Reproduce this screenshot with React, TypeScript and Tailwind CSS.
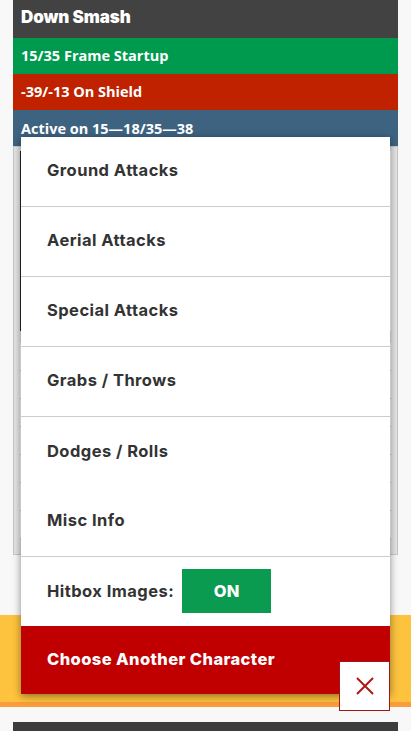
import React from "react";

const poppins = { fontFamily: "Inter, 'Noto Sans', sans-serif" };

export default function App() {
  const rows = Array.from({ length: 7 });
  const items = [
    { label: "Ground Attacks", divider: true },
    { label: "Aerial Attacks", divider: true },
    { label: "Special Attacks", divider: true },
    { label: "Grabs / Throws", divider: true },
    { label: "Dodges / Rolls", divider: false },
    { label: "Misc Info", divider: true },
  ];
  return (
    <div className="relative w-[411px] h-[731px] overflow-hidden bg-[#f8f8f8]">
      {/* card */}
      <div className="mx-[13px] flex flex-col">
        <div className="h-[38px] bg-[#424242] flex items-center pl-[8px] pb-[2px]">
          <span className="text-white text-[17px] font-black tracking-[-0.1px]" style={poppins}>
            Down Smash
          </span>
        </div>
        <div
          className="h-[36px] bg-[#009a4e] flex items-center pl-[8px] text-white text-[14.5px] font-bold"
          style={{ fontFamily: "'Open Sans', sans-serif" }}
        >
          15/35 Frame Startup
        </div>
        <div
          className="h-[36px] bg-[#c02200] flex items-center pl-[8px] text-white text-[14.5px] font-bold"
          style={{ fontFamily: "'Open Sans', sans-serif" }}
        >
          -39/-13 On Shield
        </div>
        <div
          className="h-[36px] bg-[#3e6381] flex items-start pt-[8px] pl-[8px] text-white text-[14.5px] font-bold"
          style={{ fontFamily: "'Open Sans', sans-serif" }}
        >
          Active on 15—18/35—38
        </div>
        <div className="h-[409px] border border-[#c8c8c8] bg-[#e4e4e4] px-[6px] pt-[4px] flex flex-col">
          <div className="h-[180px] bg-white border-l-2 border-[#222]" />
          <div className="h-[12px]" />
          <div className="flex flex-col bg-white">
            {rows.map((_, i) => (
              <div key={i} className="h-[28px] border-b border-[#c8c8c8]" />
            ))}
          </div>
        </div>
      </div>

      {/* yellow footer */}
      <div className="mt-[60px] h-[92px] bg-[#fdc33e] border-b-[5px] border-[#f99c3c]" />
      <div className="mt-[15px] mx-[13px] h-[20px] bg-[#3c3c3c]" />

      {/* menu overlay */}
      <div className="absolute left-[21px] top-[137px] w-[369px] bg-white shadow-[0_2px_8px_rgba(0,0,0,0.45)] flex flex-col">
        {items.map((it) => (
          <div
            key={it.label}
            className={`h-[70px] flex items-center pl-[26px] pb-[2px] ${it.divider ? "border-b border-[#cccccc]" : ""}`}
          >
            <span className="text-[#333333] text-[16.5px] font-bold tracking-[0.45px]" style={poppins}>
              {it.label}
            </span>
          </div>
        ))}
        <div className="h-[69px] flex items-center pl-[26px] pb-[1px]">
          <span className="text-[#333333] text-[16.5px] font-bold tracking-[0.45px]" style={poppins}>
            Hitbox Images:
          </span>
          <div className="ml-[8px] w-[89px] h-[44px] bg-[#0a9b50] flex items-center justify-center">
            <span className="text-white text-[16.5px] font-extrabold tracking-[0.3px]" style={poppins}>
              ON
            </span>
          </div>
        </div>
        <div className="h-[68px] bg-[#c00000] flex items-center pl-[26px] pb-[1px]">
          <span className="text-white text-[16.5px] font-extrabold tracking-[0.4px]" style={poppins}>
            Choose Another Character
          </span>
        </div>
      </div>

      {/* close button */}
      <div className="absolute left-[339px] top-[661px] w-[51px] h-[50px] bg-white border border-[#a01515] flex items-center justify-center">
        <svg width="18" height="18" viewBox="0 0 18 18">
          <path d="M1 1 L17 17 M17 1 L1 17" stroke="#b01818" strokeWidth="2" fill="none" />
        </svg>
      </div>
    </div>
  );
}
